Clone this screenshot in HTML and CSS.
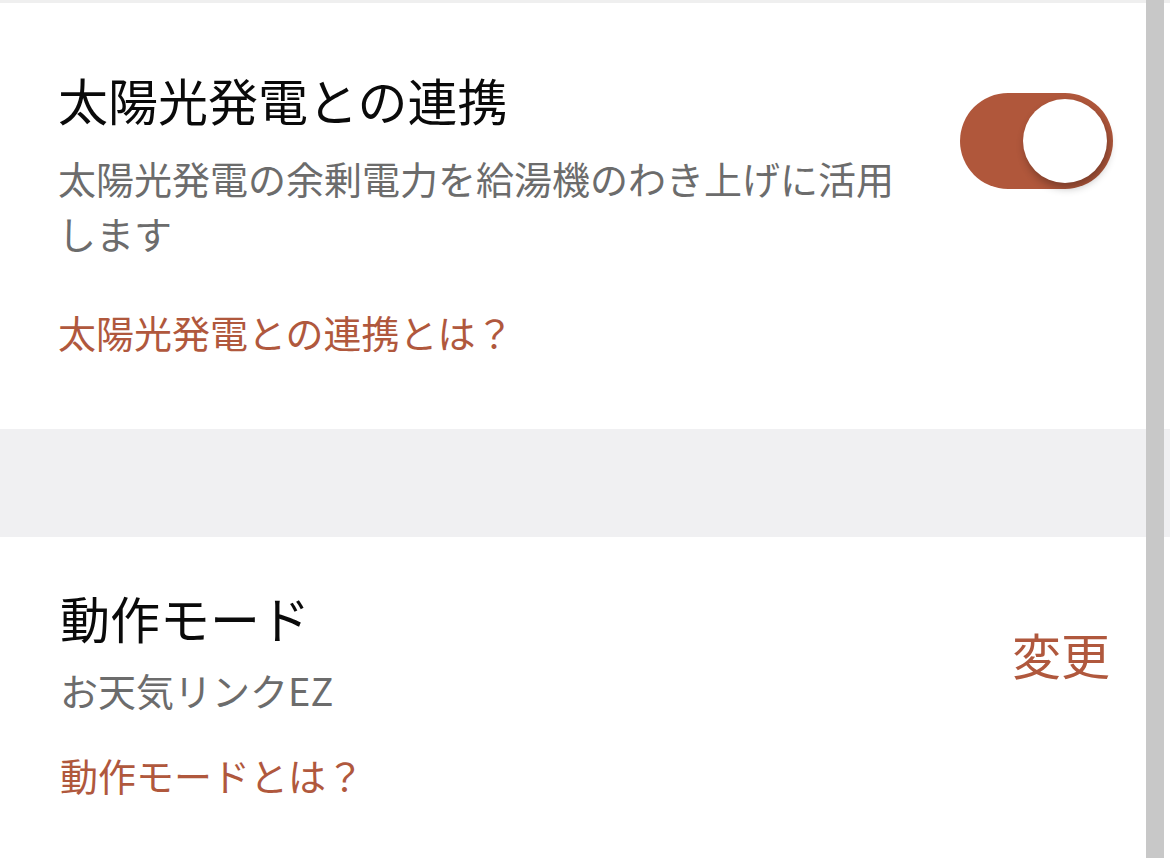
FILE: index.html
```html
<!DOCTYPE html>
<html lang="ja">
<head>
    <meta charset="UTF-8">
    <meta name="viewport" content="width=device-width, initial-scale=1.0">
    <title>設定</title>
    <link rel="stylesheet" href="styles.css">
</head>
<body>
    <div class="page">
        <div class="topline"></div>

        <div class="setting solar">
            <div class="setting-text">
                <div class="setting-title">太陽光発電との連携</div>
                <div class="setting-desc">太陽光発電の余剰電力を給湯機のわき上げに活用します</div>
                <a class="setting-link" href="#">太陽光発電との連携とは？</a>
            </div>
            <div class="toggle on">
                <span class="knob"></span>
            </div>
        </div>

        <div class="spacer"></div>

        <div class="setting mode">
            <div class="setting-text">
                <div class="setting-title">動作モード</div>
                <div class="setting-desc">お天気リンクEZ</div>
                <a class="setting-link" href="#">動作モードとは？</a>
            </div>
            <a class="change" href="#">変更</a>
        </div>

        <div class="scrollbar"></div>
    </div>
</body>
</html>
```

FILE: styles.css
```css
body {
    margin: 0;
    padding: 0;
    background-color: #ffffff;
    font-family: "Noto Sans CJK JP", "Noto Sans", sans-serif;
    overflow: hidden;
}
.page {
    position: relative;
    min-height: 858px;
}
.topline {
    height: 3px;
    background-color: #efefef;
}
.setting {
    display: flex;
    align-items: flex-start;
    gap: 50px;
    padding: 66px 57px 69px 58px;
}
.setting-text {
    flex: 1;
    display: flex;
    flex-direction: column;
    align-items: flex-start;
}
.setting-title {
    font-size: 50px;
    line-height: 60px;
    color: #0a0a0a;
}
.setting-desc {
    margin-top: 21px;
    font-size: 38px;
    line-height: 55px;
    color: #6c6c6c;
}
.setting-link {
    margin-top: 44px;
    font-size: 38px;
    line-height: 56px;
    color: #b0583d;
    text-decoration: none;
}
.toggle {
    flex: none;
    margin-top: 24px;
    width: 153px;
    height: 96px;
    border-radius: 48px;
    background-color: #b0573b;
    position: relative;
}
.toggle .knob {
    position: absolute;
    top: 6px;
    right: 6px;
    width: 84px;
    height: 84px;
    border-radius: 50%;
    background-color: #ffffff;
    box-shadow: 2px 5px 8px rgba(0, 0, 0, 0.3);
}
.spacer {
    height: 108px;
    background-color: #f0f0f2;
}
.mode {
    padding-top: 50px;
    padding-right: 60px;
    padding-left: 60px;
}
.mode .setting-desc {
    margin-top: 15px;
}
.mode .setting-link {
    margin-top: 30px;
}
.change {
    flex: none;
    margin-top: 37px;
    font-size: 49px;
    line-height: 60px;
    color: #b0583d;
    text-decoration: none;
}
.scrollbar {
    position: absolute;
    top: 0;
    right: 6px;
    width: 18px;
    height: 858px;
    background-color: #c8c8c8;
}
```
